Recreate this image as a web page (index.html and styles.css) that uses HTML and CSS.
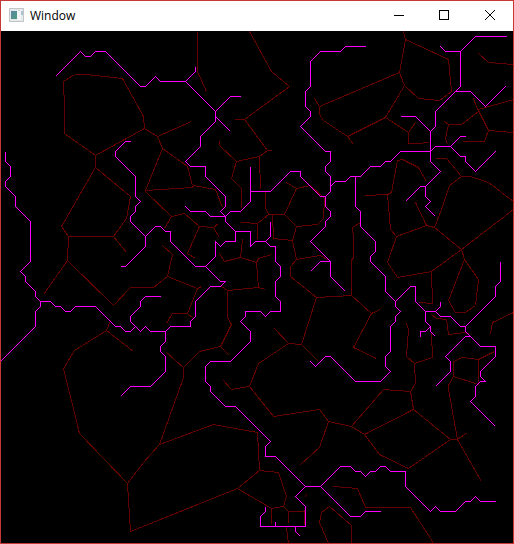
FILE: index.html
```html
<!DOCTYPE html>
<html lang="en">
<head>
<meta charset="utf-8">
<title>Window</title>
<link rel="stylesheet" href="styles.css">
</head>
<body>
<main class="window">
  <header class="titlebar">
    <svg class="app-icon" viewBox="0 0 16 14" aria-hidden="true">
      <defs>
        <linearGradient id="pane" x1="0" y1="0" x2="1" y2="1">
          <stop offset="0" stop-color="#5b87a8"/>
          <stop offset="1" stop-color="#4f9c7c"/>
        </linearGradient>
      </defs>
      <rect x="0" y="0" width="15" height="14" fill="#c4c7ca"/>
      <rect x="1" y="1" width="13" height="12" fill="#e6e8ea"/>
      <rect x="2" y="3" width="6" height="8" fill="url(#pane)"/>
      <rect x="8" y="2" width="4" height="10" fill="#f4f5f6"/>
      <rect x="12" y="3" width="2" height="4" fill="#a9c4cf"/>
      <rect x="9" y="2" width="2" height="1" fill="#cfd3d8"/>
    </svg>
    <h1 class="title">Window</h1>
    <div class="controls">
      <button class="control" type="button" aria-label="Minimize">
        <svg class="glyph" viewBox="0 0 10 10"><path d="M1 5.5H11"/></svg>
      </button>
      <button class="control" type="button" aria-label="Maximize">
        <svg class="glyph" viewBox="0 0 10 10"><path d="M.5 .5H9.5V9.5H.5Z"/></svg>
      </button>
      <button class="control" type="button" aria-label="Close">
        <svg class="glyph glyph-smooth" viewBox="0 0 10 10"><path d="M0 0L10 10M10 0L0 10"/></svg>
      </button>
    </div>
  </header>
  <svg class="canvas" viewBox="0.5 30.5 512 512" role="img" aria-label="Cell edges and paths">
    <!-- cell edges -->
    <path class="cells" d="
      M74 74L86 74L122 78L143 116L144 128L95 155L64 133L64 108L63 81L74 74
      M144 128L157 136L191 121 M157 136L162 148L187 166L192 185 M162 148L145 190
      M145 191L171 216L184 213L199 226L213 227L218 223 M213 227L219 237 M199 226L187 253L195 258 M171 216L164 228
      M145 190L192 187L193 185L215 189L222 207
      M95 155V167L130 196L126 218L113 236L126 252 M113 236H68L61 226L95 167
      M68 236L67 260L43 294 M67 260L113 305L130 287H153L167 276L172 254L162 245
      M167 276L197 288L201 286 M197 288L187 313L193 318 M187 313H172L166 323
      M110 320L106 330L74 350L63 368L79 433L127 483L130 531L237 488 M106 330L133 351
      M166 352L183 367L199 351L220 346L229 355 M220 346L231 324L227 317V290L221 286
      M227 290L258 287L265 289 M258 287L256 262L240 257L224 261L219 253 M240 257L242 239 M256 262L258 258L271 254
      M241 222L257 223L257 238 M257 223L268 214L265 207V191 M268 214H284L296 188L286 182
      M296 188L310 185L324 198L323 218L317 224L296 226L284 214 M272 214L273 238L292 240L296 226
      M292 240L296 259L320 255L328 260 M296 259L290 266V276L316 297L351 295V259L353 258V237L352 227L360 222
      M351 295L371 313L380 309 M371 313L353 347L376 358 M316 297L301 344L318 361 M301 344L288 343L274 328
      M288 343L258 363L249 386L231 389L223 380 M249 386L273 416L319 409L328 421L319 447L300 464
      M328 421L351 426L383 389L410 391L415 383L414 363L406 356L408 329L406 323 M414 363L432 357L431 333
      M410 391L413 409L364 434L351 426 M364 434L379 454L408 468L450 439L413 409
      M450 439H457L467 432 M457 439L481 481 M457 439L448 389V385L453 376L478 384V359L462 357L453 361V376
      M478 359L494 351
      M197 31V71L206 91 M249 31L271 71L289 86L244 119H234 M244 119L267 150H271 M267 150L259 156L260 189
      M259 156L236 161L219 145V140 M236 161L231 178L241 188V207
      M314 98L319 106V114L323 120L347 136L353 144 M319 106L399 72L405 39L403 31
      M405 39L448 59L451 91L439 100L418 98L404 85L399 72 M404 85L385 117L347 136 M385 117L408 132L415 122
      M408 132V143H416L429 142 M478 53L488 62L513 64
      M444 121L448 124H461L478 111L473 98 M478 109L513 99 M478 110L488 130L513 132 M488 130L484 141H462
      M448 124L445 138L447 144 M435 158H446L461 176L449 185L441 209L434 227L426 225L415 202
      M461 176H470L488 182L513 201 M426 225L396 236L390 229L387 194L365 195
      M387 194L391 192L397 160L402 159L418 167L426 181 M434 227L461 249L513 209
      M461 249L431 271L397 277L387 262L396 236 M431 271L432 303L419 302
      M461 249L464 259L448 300L455 312H465L475 305L478 279L464 259
      M431 314L436 318L446 319L448 334L465 332L469 334 M490 334L492 322L513 312
      M127 483L143 462L159 444L183 377V367 M159 444L213 424L257 432L259 470L237 488
      M259 470L278 472L286 496L283 506L271 508L237 488 M271 508V523 M283 506L288 511H304 M288 511V522
      M304 524V509 M304 497L306 494 M286 527L288 543
      M333 486L357 488L365 507H410L432 541V543 M328 543L319 522L321 512L329 506L351 525V543"/>
    <!-- routed paths on a five unit grid -->
    <path class="paths" transform="translate(-1 0)" d="
      M56 76L81 51L86 56H91L96 51H106L141 86H146L156 76L161 81H186L216 111L231 96H241
      M186 81L196 71V66 M216 116L231 131
      M216 111V121L201 136V146L186 161L191 166H206V176L226 196V206L221 211L226 216H211L206 211H191L186 206
      M226 216L231 211H241L251 201V166 M251 191H271L291 171H301V176L321 196H326L331 191V176L326 171V166L331 161V151H326L301 126L311 116V111L306 106V91L311 86V61L321 51H341L346 46H366
      M331 186L336 181H346L351 176H361L371 166H381L386 161H391L401 151H431L436 146H451L461 136H466
      M451 146L461 156H466V161L476 171L496 151
      M401 116H416L431 131L436 126V111L461 86V51L476 36H507 M461 51H446L441 46 M456 91H471L486 106L506 86
      M431 131V161L441 171L426 186H421L406 201 M426 186V196L431 201L426 206L436 216
      M356 176V206L361 211V226L376 241V251L371 256V261L386 276V291L396 301V306L401 311L396 316V321L391 326V351L386 356V366L391 371L381 381H356L331 356H326L316 366L311 361
      M396 301L411 286H416V301L426 311H436L441 306V301 M436 311L441 316H451L461 326H466L496 296V286L501 281V261
      M466 326V331L481 346H496V356L481 371V376L486 381H481L476 386V396L471 401L496 426
      M471 336H466L446 356L451 361V371L436 386
      M426 311V321L431 326L426 331H421V336 M431 326V331L436 336
      M326 196V206L331 211V216L326 221V226L311 241L331 261V276L346 291 M331 261H321L311 271
      M226 216V221L236 231H251V246L256 241H266L271 236V221
      M266 241L271 246H276V261L281 266V276L276 281V296L281 301V311H271L266 316L261 311H246V316L241 321L251 331V341L231 361H211L206 366V381L211 386V391L226 406H236L271 441L266 446V456H276L306 486H321L341 466H351L356 471H361L366 476L371 471H376L381 466H386L391 471H406V486L431 511L436 506L441 511H456L466 501H471L476 496L481 501H496
      M321 486L351 516H361L366 511H381
      M306 486L296 496L306 506V526H261V516L266 511V506 M276 526V521 M296 526V531L301 536
      M236 231V241H226L221 246L216 241V256L206 266H196L171 241V231H166L161 226H156L146 236V246L126 266H121
      M206 266L221 281H226L221 286H211L196 301V316L191 321V326H171L166 331H151L146 326L141 331L131 321V316L141 306V301L146 296H161
      M136 326L131 331H126L121 326H116L96 306H76L71 311H66L61 306H56L51 301H41L36 296V291L26 281V276L21 271L31 261V221L16 206V196L6 186V181L11 176V166L6 161V151
      M41 301V306L36 311V326L1 361
      M166 331V341L161 346V351L166 356V371L151 386H131L121 396
      M131 141H126L116 151V156L136 176V196L141 201L136 206V211L131 216V221L146 236"/>
  </svg>
</main>
</body>
</html>
```
FILE: styles.css
```css
* {
  box-sizing: border-box;
}

body {
  margin: 0;
  background: #000;
}

.window {
  display: flex;
  flex-direction: column;
  min-height: 100vh;
  border: 1px solid #c83737;
  background: #000;
}

.titlebar {
  display: flex;
  align-items: center;
  height: 30px;
  padding: 0 0 2px 8px;
  background: #fff;
  color: #000;
}

.app-icon {
  width: 16px;
  height: 14px;
}

.title {
  margin: 0 0 0 5px;
  padding-top: 2px;
  font: 400 12px/16px "Open Sans", "Noto Sans", sans-serif;
}

.controls {
  display: flex;
  align-self: stretch;
  margin-left: auto;
}

.control {
  display: flex;
  align-items: center;
  justify-content: center;
  width: 46px;
  padding: 0;
  border: 0;
  background: transparent;
}

.glyph {
  width: 10px;
  height: 10px;
  overflow: visible;
  fill: none;
  stroke: #000;
  shape-rendering: crispEdges;
}

.glyph-smooth {
  shape-rendering: auto;
}

.canvas {
  display: block;
  width: 100%;
  height: auto;
}

.cells,
.paths {
  fill: none;
  stroke-width: 1;
  shape-rendering: crispEdges;
}

.cells {
  stroke: #640000;
}

.paths {
  stroke: #f0f;
}
```
